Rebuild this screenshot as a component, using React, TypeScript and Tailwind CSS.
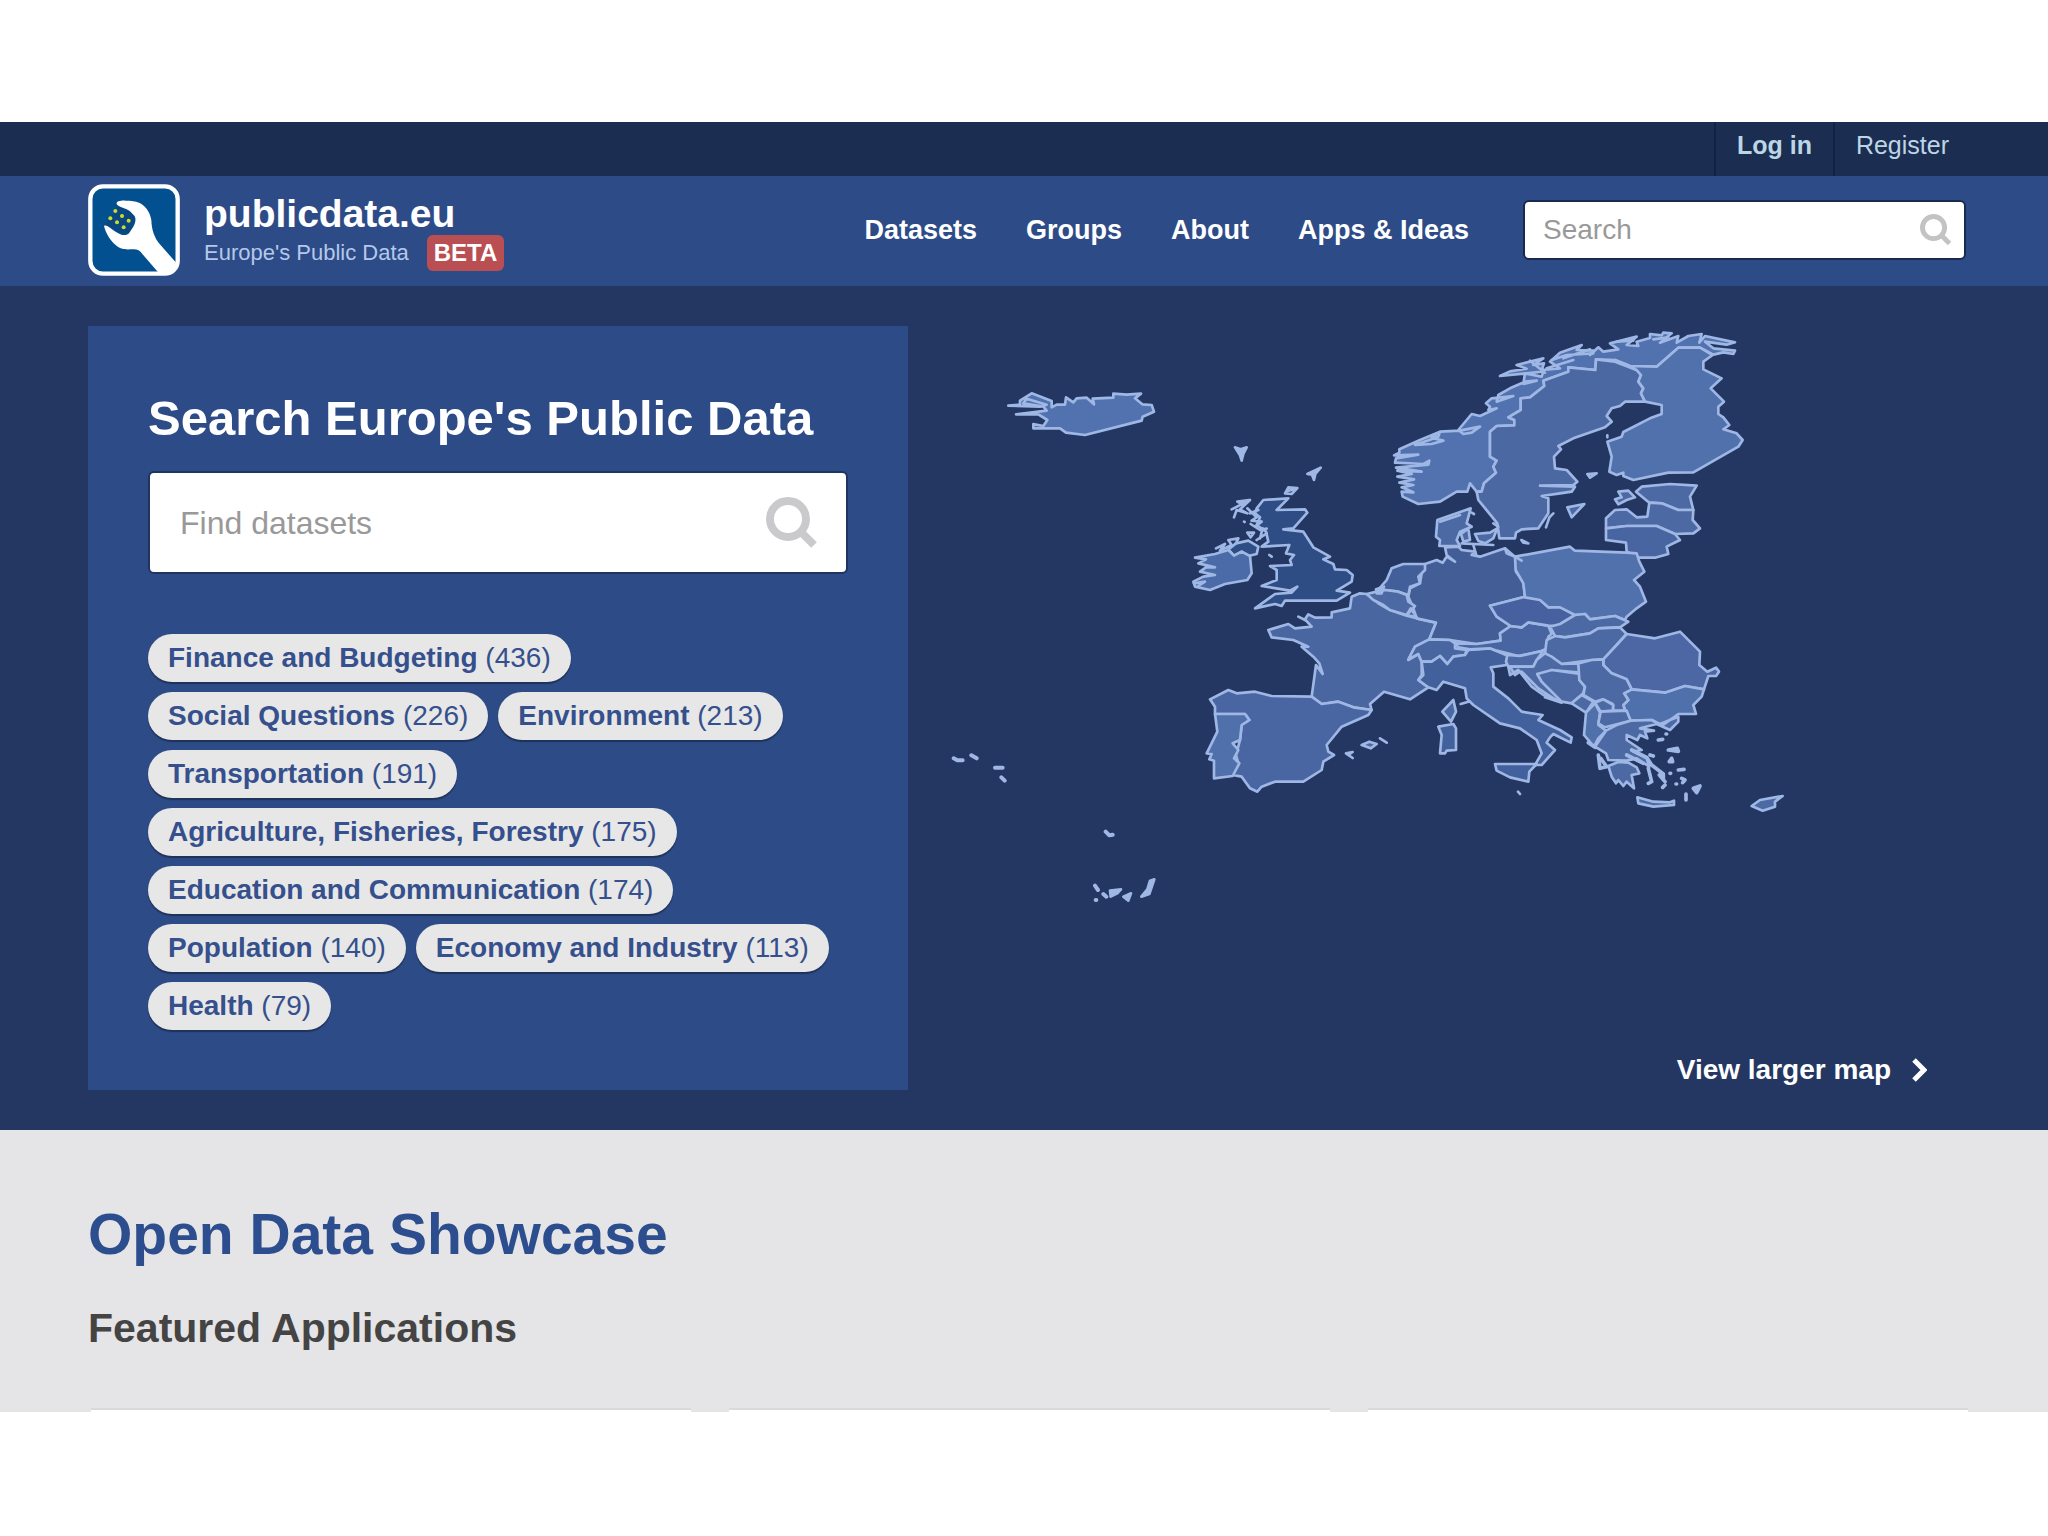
import { useState, FormEvent } from "react";

const tags = [
  { name: "Finance and Budgeting", count: 436 },
  { name: "Social Questions", count: 226 },
  { name: "Environment", count: 213 },
  { name: "Transportation", count: 191 },
  { name: "Agriculture, Fisheries, Forestry", count: 175 },
  { name: "Education and Communication", count: 174 },
  { name: "Population", count: 140 },
  { name: "Economy and Industry", count: 113 },
  { name: "Health", count: 79 },
];

const navLinks = ["Datasets", "Groups", "About", "Apps & Ideas"];

function SearchIcon({ className }: { className: string }) {
  return (
    <svg viewBox="0 0 52 52" className={className} fill="none" stroke="currentColor" aria-hidden="true">
      <circle cx="22" cy="22" r="18" strokeWidth="8" />
      <path d="M35 35 L48 48" strokeWidth="8" />
    </svg>
  );
}

function Logo() {
  return (
    <svg viewBox="0 0 276 276" className="size-[92px]" aria-hidden="true">
      <rect x="7" y="7" width="262" height="262" rx="38" fill="#02508f" stroke="#fff" strokeWidth="13" />
      <path d="M90 66 L128 83 L141 103 L124 148 L84 143 L52 126 Z" fill="#0a467f" />
      <path
        d="M86 60 C84 52 98 49 113 50 C130 50 142 51 153 56 C170 63 186 82 190 108 C191 140 200 160 213 178 L266 238 C266 260 250 270 222 270 L213 268 L163 210 C156 200 148 196 138 196 C122 196 112 198 98 193 C78 184 56 158 48 126 C58 120 68 136 83 143 C96 152 114 158 123 148 L136 128 C144 114 144 102 139 95 L126 82 C112 70 90 70 86 60 Z"
        fill="#fff"
      />
      <g fill="#cbdc2c">
        <circle cx="82" cy="81" r="6" />
        <circle cx="67" cy="103" r="6" />
        <circle cx="102" cy="96" r="6" />
        <circle cx="87" cy="115" r="6" />
        <circle cx="122" cy="110" r="6" />
        <circle cx="107" cy="130" r="6" />
      </g>
    </svg>
  );
}

function EuropeMap() {
  return (
    <svg
      viewBox="0 0 3180 1800"
      className="block h-auto w-full"
      fill="#4d69a3"
      stroke="#9fb7e4"
      strokeWidth="8"
      strokeLinejoin="round"
      strokeLinecap="round"
      role="img"
      aria-label="Map of Europe"
    >
      {/* Iceland and the Atlantic islands */}
      <g transform="translate(96 132)">
        <path fill="#5172ae" d="M205 107 L240 104 L240 92 L275 70 L335 93 L335 112 L350 104 L375 104 L378 82 L400 97 L410 85 L440 83 L462 103 L458 86 L520 83 L520 71 L560 74 L603 71 L585 85 L607 103 L635 105 L642 125 L608 140 L605 152 L435 195 L378 188 L360 175 L280 175 L280 162 L310 168 L322 150 L295 133 L228 133 L320 122 L310 110 L250 100 L260 86 L320 104 L300 110 Z" />
        <path fill="none" strokeWidth="12" d="M41 1165 L52 1171 L68 1171 M94 1156 L110 1165 M165 1193 L188 1193 M184 1222 L194 1232 M497 1385 L508 1396 L518 1394 M465 1547 L474 1560 M490 1572 L499 1580 M467 1590 L469 1590" />
        <path fill="#9fb7e4" d="M510 1562 L543 1558 L532 1570 L512 1580 Z M550 1580 L573 1570 L565 1592 Z M604 1580 L622 1558 L630 1532 L643 1528 L628 1572 Z" />
      </g>

      {/* Nordic and Baltic countries */}
      <g transform="translate(1356 -48)">
        <path fill="#5172ae" d="M350 545 L330 520 L322 545 L290 545 L240 575 L175 582 L128 560 L125 545 L160 547 L125 532 L160 525 L118 518 L162 508 L112 500 L155 492 L112 482 L185 485 L108 473 L205 464 L208 452 L190 462 L105 458 L108 445 L175 434 L102 436 L118 428 L118 418 L180 390 L240 365 L215 384 L250 392 L215 402 L165 405 L235 380 L240 365 L300 362 L360 350 L335 368 L310 372 L295 360 L335 312 L360 318 L410 295 L385 300 L390 290 L378 280 L395 265 L460 258 L410 275 L415 255 L450 235 L495 215 L530 212 L490 222 L495 190 L545 200 L550 185 L420 198 L450 184 L500 176 L470 165 L550 145 L520 165 L552 160 L545 180 L600 175 L570 155 L600 128 L665 105 L650 120 L700 122 L690 135 L715 112 L730 125 L775 118 L750 100 L830 80 L800 105 L835 108 L830 95 L870 84 L870 72 L905 76 L910 68 L935 70 L900 98 L955 78 L950 98 L985 78 L1025 72 L1018 98 L1035 78 L1125 97 L1100 104 L1035 95 L1060 115 L1125 122 L1120 132 L1090 127 L1060 134 L1020 113 L955 113 L890 170 L810 168 L765 150 L708 148 L706 180 L625 172 L625 185 L550 212 L553 228 L510 262 L482 265 L482 300 L445 322 L463 330 L463 346 L410 348 L390 365 L390 440 L410 452 L400 470 L408 488 L372 520 L365 545 Z" />
        <path fill="none" d="M575 150 L620 135 L700 130 M610 145 L690 118 M560 175 L640 150 M510 152 L555 188 M770 95 L820 92 M880 88 L925 82" />
        <path fill="#4c68a3" d="M350 545 L365 545 L372 520 L408 488 L400 470 L410 452 L390 440 L390 365 L410 348 L463 346 L463 330 L445 322 L482 300 L482 265 L510 262 L553 228 L550 212 L625 185 L625 172 L706 180 L708 148 L765 155 L830 180 L843 195 L835 215 L850 235 L843 250 L855 275 L795 275 L780 288 L755 295 L740 318 L755 335 L735 352 L640 385 L595 408 L603 418 L582 440 L585 475 L620 480 L652 515 L640 525 L540 527 L645 530 L635 545 L600 550 L545 558 L565 565 L565 610 L535 655 L485 658 L468 668 L465 685 L418 685 L412 640 L355 570 Z" />
        <path fill="#5171ac" d="M765 150 L810 168 L890 170 L955 113 L1020 113 L1058 135 L1030 155 L1030 178 L1085 205 L1052 235 L1092 275 L1075 290 L1075 312 L1090 322 L1108 345 L1090 358 L1130 370 L1148 390 L1135 410 L1000 487 L925 488 L820 510 L790 498 L790 488 L770 495 L748 485 L755 440 L742 395 L785 380 L790 366 L870 325 L905 312 L905 285 L855 275 L843 250 L850 235 L835 215 L843 195 L830 180 Z" />
        <path d="M828 545 L845 530 L930 522 L1010 527 L990 560 L1000 600 L955 600 L905 580 L868 578 Z M765 568 L785 562 L775 545 L805 542 L825 562 L800 570 L775 583 Z" />
        <path d="M738 655 L738 625 L765 600 L800 598 L830 622 L862 620 L868 578 L905 580 L955 600 L1000 600 L998 630 L1020 655 L1000 670 L945 672 L890 648 L800 648 Z" />
        <path fill="#4865a2" d="M738 655 L800 648 L890 648 L945 672 L960 690 L920 710 L925 732 L885 743 L838 743 L800 725 L798 698 L738 690 Z" />
        <path d="M332 595 L320 640 L335 650 L300 665 L290 690 L300 708 L238 708 L240 690 L228 680 L232 630 Z M345 672 L390 668 L412 655 L400 685 L375 700 L355 693 Z M303 672 L325 655 L330 690 L310 695 Z" />
        <path fill="none" d="M240 635 L300 615 M305 700 L400 705 M340 705 L350 740 M335 608 L342 612 M400 640 L415 650" />
        <path d="M682 492 L710 490 L690 503 Z M622 592 L673 582 L635 622 Z M580 610 L568 622 L558 652 M484 690 L505 700 L490 698 Z M742 376 L742 382" />
      </g>

      {/* Western Europe */}
      <g transform="translate(756 312)">
        <path fill="#2e4d85" d="M285 535 L345 492 L395 488 L412 470 L390 482 L305 468 L350 450 L350 420 L330 408 L395 405 L390 390 L402 375 L378 370 L388 345 L305 350 L325 335 L318 305 L290 285 L300 262 L285 250 L290 235 L310 210 L385 205 L350 240 L435 238 L442 248 L400 295 L370 298 L430 305 L460 352 L510 380 L490 388 L520 402 L525 418 L560 420 L578 435 L575 455 L530 482 L570 488 L530 512 L375 512 L365 528 L345 522 Z" />
        <path fill="#2e4d85" d="M205 358 L228 340 L265 332 L295 350 L290 372 L265 378 L245 365 L222 377 Z" />
        <path fill="#4a6aa8" d="M105 383 L165 372 L205 360 L222 377 L245 365 L270 378 L275 430 L262 450 L195 462 L150 480 L105 470 L100 455 L130 440 L165 435 L120 425 L138 412 L165 412 L115 400 L138 388 Z" />
        <path fill="none" d="M168 355 L195 342 L180 362 L215 345 L205 330 L235 325 L228 340 M215 238 L270 210 L240 238 L262 250 L230 240 L222 262 M232 215 L245 222 M232 215 L268 210 M262 235 L290 262 L275 272 L305 275 L285 290 M270 250 L295 240 M272 282 L300 300 L320 296 M262 308 L282 308 L272 322 L262 308 M300 325 L308 295 M290 330 L320 310 M252 275 L254 276 M375 190 L385 172 L412 174 L395 192 Z M380 184 L402 178 M328 375 L335 380 M102 460 L135 455 L115 468 M415 560 L435 570" />
        <path fill="#9fb7e4" d="M225 52 L242 58 L260 52 L250 72 L245 92 L240 76 Z M442 132 L482 113 L466 132 L462 150 L456 134 Z" />
        <path fill="#4a66a1" d="M575 500 L600 490 L620 492 L640 505 L655 520 L690 540 L740 557 L770 565 L828 578 L808 628 L765 650 L745 690 L775 672 L785 695 L785 735 L775 750 L805 772 L750 808 L672 785 L630 822 L635 840 L580 832 L535 815 L485 822 L455 800 L468 705 L488 732 L478 700 L460 680 L425 650 L445 650 L400 630 L335 622 L325 600 L385 582 L405 595 L455 590 L435 568 L445 553 L465 563 L515 562 L515 547 L570 535 Z" />
        <path fill="#4966a3" d="M150 808 L205 780 L230 790 L285 785 L335 798 L455 800 L485 822 L535 815 L580 832 L635 840 L625 855 L545 890 L500 945 L505 965 L522 975 L490 995 L485 1020 L430 1055 L345 1055 L305 1070 L292 1085 L270 1075 L245 1040 L218 1035 L235 1000 L228 975 L240 930 L245 885 L268 870 L255 852 L165 852 L165 830 Z" />
        <path fill="#4f70ab" d="M165 852 L255 852 L268 870 L245 885 L240 930 L218 940 L235 960 L222 985 L238 1000 L218 1038 L162 1045 L162 992 L148 988 L155 972 L140 970 L172 905 Z" />
        <path fill="#435d96" d="M1070 385 L1035 355 L960 380 L935 375 L945 365 L905 360 L895 350 L855 352 L860 375 L885 395 L860 380 L848 398 L830 390 L795 402 L785 430 L780 460 L750 475 L745 500 L760 535 L770 565 L828 578 L808 628 L870 630 L950 642 L1022 632 L1020 610 L1052 588 L1010 560 L990 527 L1095 500 L1090 455 L1068 425 Z" />
        <path fill="#435f99" d="M695 415 L730 402 L795 402 L795 420 L775 440 L780 460 L750 470 L745 495 L715 485 L675 480 L650 485 L680 450 Z" />
        <path d="M620 492 L650 485 L675 480 L715 485 L740 495 L745 515 L765 528 L740 555 L690 540 L670 525 L640 510 Z M740 555 L752 535 L770 562 Z" />
        <path fill="#9fb7e4" d="M648 478 L672 470 L665 490 L650 490 Z" />
        <path fill="#4a66a1" d="M808 628 L870 630 L885 640 L885 655 L920 660 L915 675 L880 680 L862 702 L840 678 L815 695 L785 695 L775 672 L745 688 L765 650 Z" />
        <path fill="#42609b" d="M785 695 L815 695 L840 678 L862 702 L880 680 L915 675 L925 660 L990 655 L1045 678 L1040 705 L992 712 L1000 730 L1000 770 L1045 805 L1085 845 L1148 855 L1135 870 L1200 900 L1235 922 L1232 938 L1180 912 L1170 922 L1160 938 L1185 960 L1145 1005 L1125 1005 L1145 970 L1130 930 L1080 895 L1020 880 L940 825 L920 805 L915 775 L850 755 L830 780 L805 772 L775 750 L790 735 Z" />
        <path fill="#42609b" d="M1005 1002 L1130 1002 L1108 1025 L1105 1055 L1050 1042 L1010 1022 Z M835 890 L880 882 L888 895 L888 960 L860 962 L855 970 L840 970 L845 915 Z" />
        <path d="M880 810 L888 845 L873 875 L847 845 Z M605 945 L628 935 L650 942 L632 955 Z M558 970 L578 966 L565 975 L578 984 Z M660 925 L680 938 M1074 1085 L1080 1092 M902 822 L925 815" />
        <path fill="#4865a2" d="M885 640 L950 642 L1022 632 L1020 610 L1052 588 L1085 592 L1105 577 L1165 587 L1175 612 L1165 620 L1160 655 L1140 665 L1075 678 L1010 662 L990 655 L930 658 L895 652 Z" />
        <path fill="#4761a0" d="M990 527 L1095 500 L1120 500 L1140 508 L1165 532 L1200 528 L1245 555 L1215 575 L1200 590 L1165 587 L1105 577 L1085 592 L1052 588 L1010 560 Z" />
      </g>

      {/* Central Europe and the Balkans */}
      <g transform="translate(1716 582)">
        <path fill="#5171ac" d="M105 110 L270 80 L285 92 L440 98 L470 100 L478 125 L493 155 L462 180 L480 200 L498 245 L470 265 L440 290 L435 300 L405 288 L330 298 L315 282 L285 285 L240 262 L205 262 L180 240 L135 232 L130 190 L107 150 Z" />
        <path fill="none" d="M75 85 L80 100 L105 110 L125 122" />
        <path d="M210 320 L240 312 L285 285 L315 282 L330 298 L405 288 L445 305 L420 322 L355 325 L330 340 L255 352 L225 348 Z" />
        <path d="M225 348 L255 352 L330 340 L355 325 L420 322 L440 342 L410 375 L370 418 L335 420 L245 432 L195 400 L200 360 Z" />
        <path fill="#4c67a4" d="M440 342 L525 355 L600 335 L660 395 L658 435 L682 455 L708 443 L717 455 L708 468 L685 468 L672 508 L615 498 L555 518 L455 508 L440 478 L395 460 L370 435 L370 418 L410 375 Z" />
        <path fill="#5070ab" d="M455 508 L555 518 L615 498 L672 508 L665 530 L640 555 L648 582 L595 582 L570 600 L540 612 L515 600 L452 602 L435 570 L430 555 L445 540 L432 520 Z" />
        <path d="M82 405 L120 408 L190 392 L170 420 L160 440 L85 440 L78 425 Z" />
        <path d="M195 400 L215 410 L245 432 L295 430 L300 458 L215 450 L200 462 L172 462 L185 485 L245 545 L190 525 L155 500 L115 450 L90 465 L85 440 L160 440 L170 420 Z" />
        <path fill="none" d="M125 455 L175 505 L235 545 M90 440 L105 465 L120 455 M195 532 L245 548" />
        <path d="M172 462 L215 450 L300 462 L298 480 L315 500 L310 520 L275 550 L245 545 L185 485 Z" />
        <path d="M295 430 L335 420 L370 418 L370 435 L395 460 L440 478 L455 508 L432 520 L445 540 L430 555 L435 572 L400 572 L398 552 L370 538 L345 545 L310 525 L315 500 L298 480 Z" />
        <path d="M275 550 L305 525 L340 545 L318 578 Z" />
        <path d="M345 548 L370 538 L400 555 L398 572 L362 575 Z" />
        <path fill="#5070ab" d="M318 578 L345 550 L360 578 L355 615 L378 632 L355 655 L342 680 L312 645 Z" />
        <path d="M362 575 L440 572 L452 602 L375 622 L355 610 Z" />
        <path d="M378 632 L410 615 L452 602 L515 600 L545 618 L570 600 L595 590 L595 605 L570 630 L530 612 L480 625 L522 632 L495 635 L502 655 L480 645 L472 660 L440 645 L440 660 L485 690 L460 695 L500 715 L508 740 L470 715 L440 722 L385 720 L378 700 L345 680 Z" />
        <path d="M385 738 L415 726 L445 728 L470 742 L478 760 L455 765 L462 805 L440 785 L430 798 L415 780 L408 790 L395 770 Z" />
        <path fill="none" strokeWidth="11" d="M355 705 L360 745 L380 740 L362 715 M455 690 L500 712 L515 735 L550 762 L550 780 M440 705 L490 730 M505 745 L515 785 L505 790 M538 765 L555 785 M325 668 L345 682 M555 795 L548 802 M510 705 L520 708 M535 660 L548 658 M558 642 L560 642 M595 750 L612 748 M570 760 L572 760 M588 792 L590 792 M605 775 L615 780 L608 788 M618 822 L618 840 M575 715 L568 725 L578 725 Z M565 690 L592 685 L595 694 Z M640 805 L660 798 L650 818 Z" />
        <path d="M472 832 L520 845 L570 847 L582 842 L582 855 L520 860 L475 850 Z M815 858 L840 840 L908 828 L885 845 L885 860 L848 872 Z" />
      </g>
    </svg>
  );
}

export default function App() {
  const [siteQuery, setSiteQuery] = useState<string>("");
  const [datasetQuery, setDatasetQuery] = useState<string>("");

  const handleSubmit = (e: FormEvent<HTMLFormElement>) => {
    e.preventDefault();
  };

  return (
    <div className="bg-white py-[122px] font-['Liberation_Sans',Arial,sans-serif]">
      <div className="flex h-[54px] justify-end bg-[#1b2d50] pr-[78px] text-[25px] leading-[46px] text-[#bdd6e6]">
        <a href="#login" className="border-l-2 border-[#12204a] px-[21px] font-bold">
          Log in
        </a>
        <a href="#register" className="border-l-2 border-[#12204a] px-[21px]">
          Register
        </a>
      </div>

      <header className="flex h-[110px] items-center bg-[#2d4b87] pr-[82px] pb-0.5 pl-[88px]">
        <a href="#home" className="flex items-center gap-6">
          <Logo />
          <span className="flex flex-col pt-1">
            <span className="text-[39px] leading-[42px] font-bold text-white">publicdata.eu</span>
            <span className="flex items-center gap-[18px]">
              <span className="text-[22px] leading-[36px] text-[#b4c8ea]">Europe's Public Data</span>
              <span className="rounded-md bg-[#b94f52] px-[7px] text-[24px] leading-[36px] font-bold text-white">
                BETA
              </span>
            </span>
          </span>
        </a>
        <nav className="ml-auto flex gap-[49px] text-[27px] font-bold text-white">
          {navLinks.map((link) => (
            <a key={link} href="#nav">
              {link}
            </a>
          ))}
        </nav>
        <form
          onSubmit={handleSubmit}
          className="ml-[54px] flex h-[60px] w-[443px] items-center rounded-md border-2 border-[#1b2a4c] bg-white pr-3 pl-[18px]"
        >
          <input
            type="text"
            aria-label="Search"
            placeholder="Search"
            value={siteQuery}
            onChange={(e) => setSiteQuery(e.target.value)}
            className="min-w-0 flex-1 text-[28px] text-gray-700 outline-none placeholder:text-[#999999]"
          />
          <button aria-label="Submit search" className="text-[#c3c3c3]">
            <SearchIcon className="size-8" />
          </button>
        </form>
      </header>

      <main>
        <section className="flex bg-[#233762] py-10 pr-20 pl-[88px]">
          <div className="w-[820px] shrink-0 bg-[#2d4b87] p-[60px]">
            <h1 className="text-[49px] leading-[64px] font-bold text-white">Search Europe's Public Data</h1>
            <form
              onSubmit={handleSubmit}
              className="mt-[21px] flex h-[103px] items-center rounded-md border-2 border-[#1f3460] bg-white pr-7 pl-[30px]"
            >
              <input
                type="text"
                aria-label="Find datasets"
                placeholder="Find datasets"
                value={datasetQuery}
                onChange={(e) => setDatasetQuery(e.target.value)}
                className="min-w-0 flex-1 text-[32px] text-gray-700 outline-none placeholder:text-[#999999]"
              />
              <button aria-label="Find" className="text-[#cacacc]">
                <SearchIcon className="size-[52px]" />
              </button>
            </form>
            <ul className="mt-[60px] flex flex-wrap gap-[10px]">
              {tags.map((tag) => (
                <li key={tag.name}>
                  <a
                    href="#tag"
                    className="block rounded-full bg-[#e7e7e7] px-5 text-[28px] leading-[48px] text-[#35508c] shadow-[0_2px_1px_#1f3259]"
                  >
                    <strong>{tag.name}</strong> ({tag.count})
                  </a>
                </li>
              ))}
            </ul>
          </div>
          <div className="flex min-w-0 flex-1 flex-col">
            <EuropeMap />
            <a
              href="#map"
              className="mt-auto mr-[41px] flex items-center gap-5 self-end text-[28px] leading-[40px] font-bold text-white"
            >
              View larger map
              <svg viewBox="0 0 16 24" className="h-6 w-4" fill="none" stroke="currentColor" aria-hidden="true">
                <path d="M3 2 L13 12 L3 22" strokeWidth="5" />
              </svg>
            </a>
          </div>
        </section>

        <section className="bg-[#e5e4e6] pt-[72px] pr-20 pl-[88px]">
          <h2 className="text-[57px] leading-[64px] font-bold text-[#2c4e8e]">Open Data Showcase</h2>
          <h3 className="mt-[38px] text-[41px] leading-[48px] font-bold text-[#444444]">Featured Applications</h3>
          <div className="mt-14 grid grid-cols-3 gap-[38px] pl-[3px]">
            <div className="h-1 border-t-2 border-[#dadadc] bg-white" />
            <div className="h-1 border-t-2 border-[#dadadc] bg-white" />
            <div className="h-1 border-t-2 border-[#dadadc] bg-white" />
          </div>
        </section>
      </main>
    </div>
  );
}
